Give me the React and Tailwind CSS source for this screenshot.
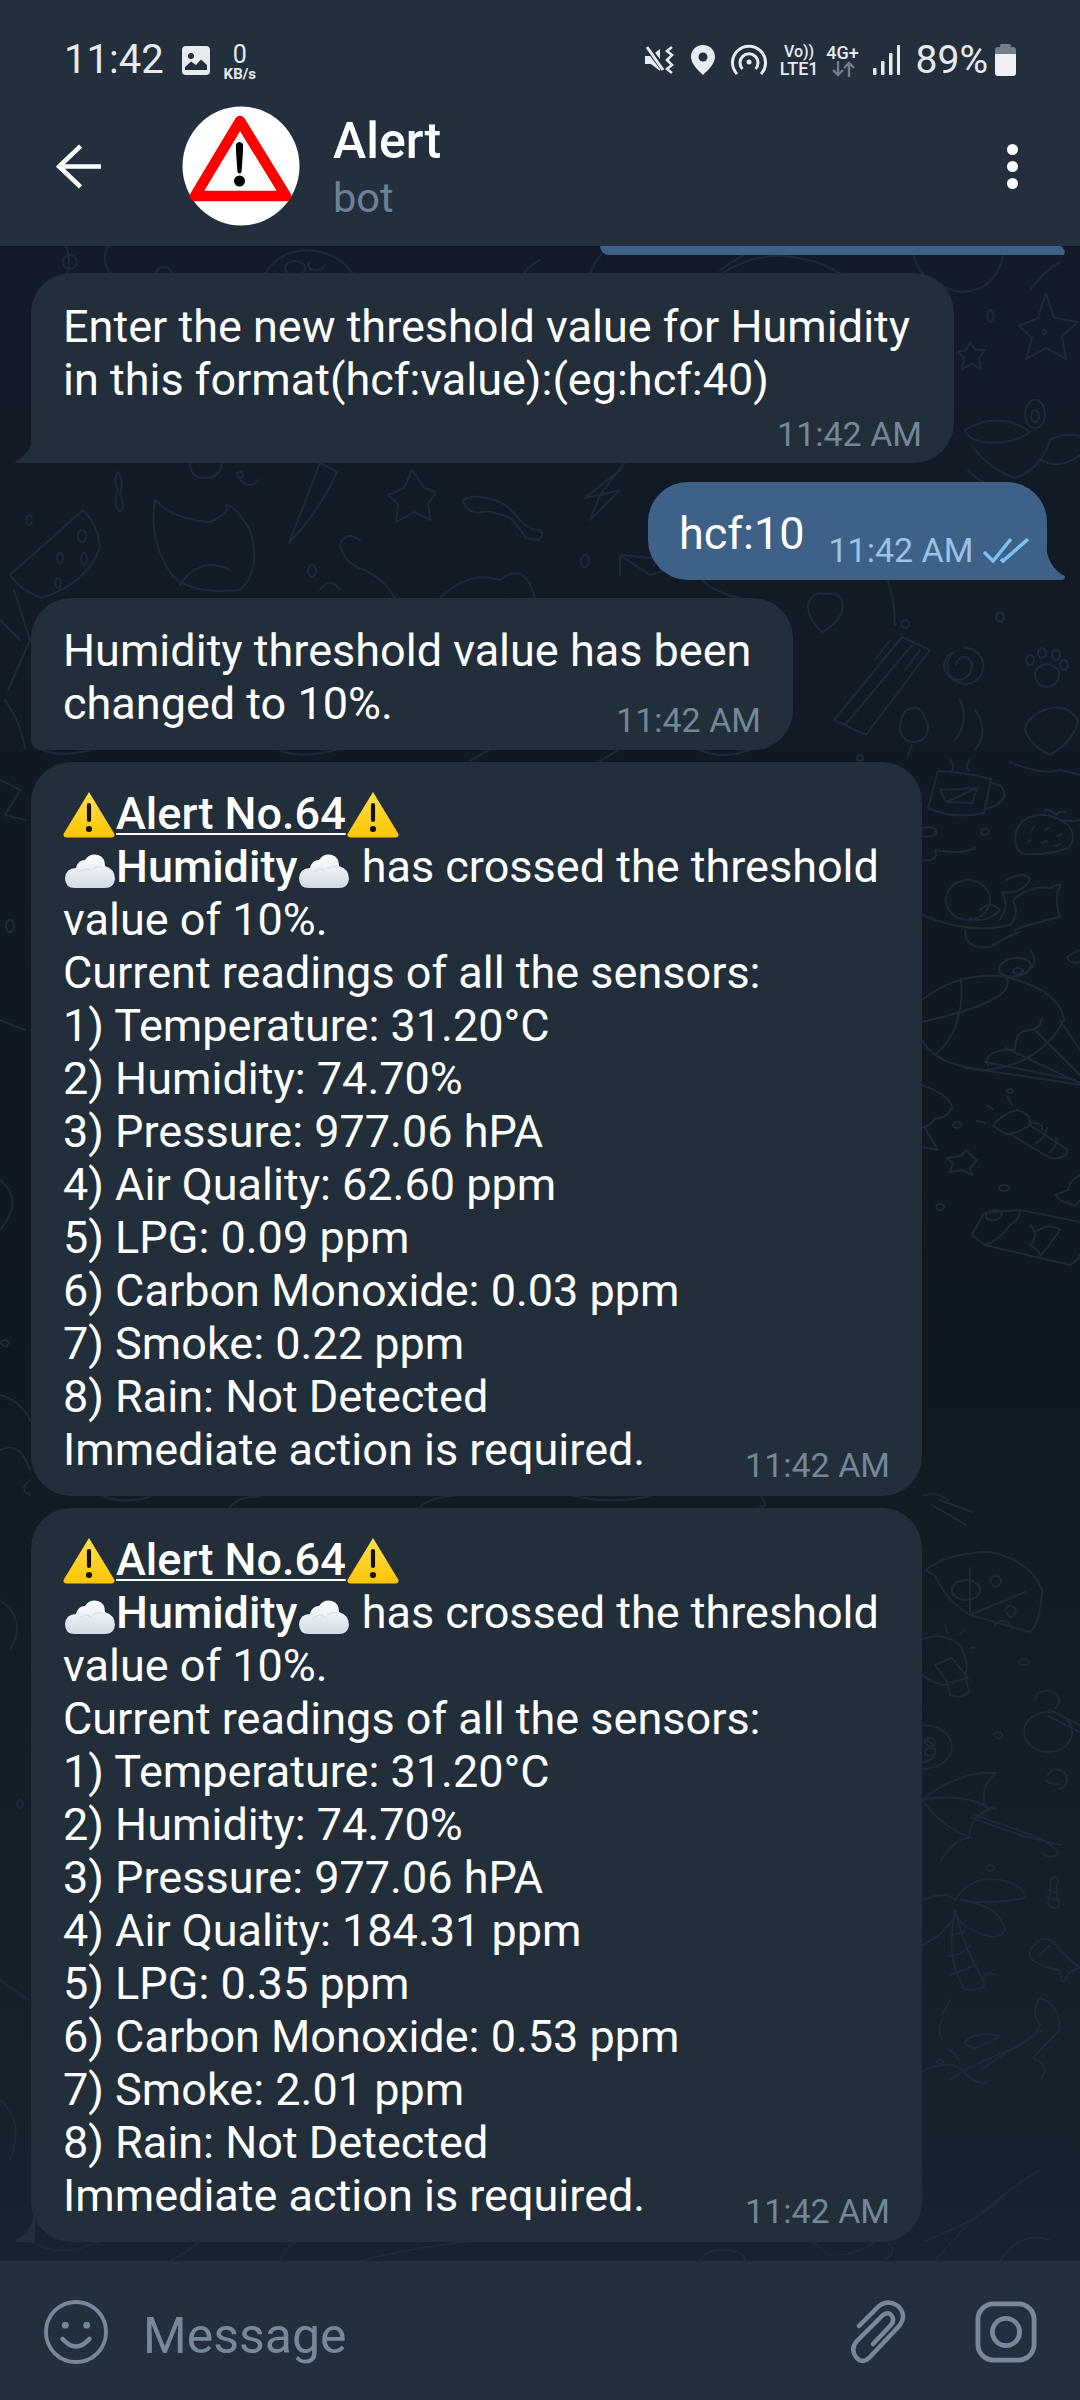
import React from "react";

const doodles = [
  "M70 262 m-7 0 a7 7 0 1 0 14 0 a7 7 0 1 0 -14 0",
  "M66 246 Q72 262 66 276 Q64 290 72 300 M108 246 Q100 262 112 275",
  "M150 290 Q155 262 168 268 Q178 275 165 290",
  "M258 290 Q270 250 310 250 Q350 255 360 290 M285 268 a10 7 0 1 0 20 0 a10 7 0 1 0 -20 0 M310 262 a8 5 0 1 0 14 4",
  "M540 260 Q520 270 520 290 M610 246 Q590 262 585 290",
  "M700 290 Q740 255 780 256 Q830 258 860 290 M720 270 Q760 240 790 246",
  "M912 246 Q915 285 962 292 Q1000 290 1005 246",
  "M1030 290 Q1045 270 1060 262",
  "M1046 293 L1054 318 L1078 322 L1062 336 L1066 359 L1046 348 L1026 359 L1032 338 L1019 326 L1038 318Z M1044 330 a2 2 0 1 0 1 0",
  "M970 343 L976 350 L985 350 L979 358 L981 369 L972 364 L962 369 L964 358 L958 352 L966 350Z",
  "M990 310 a3 6 0 1 0 1 0",
  "M1035 400 a10 14 0 1 0 .1 0 M1035 410 a4 6 0 1 0 .1 0",
  "M965 430 Q1000 410 1030 432 Q1012 445 985 442 Q968 440 965 430Z M972 446 Q990 470 1015 478 Q1040 470 1050 440 Q1065 432 1080 436",
  "M968 470 Q985 490 1020 492 M1040 460 Q1060 470 1080 455",
  "M83 510 L10 575 Q20 590 41 598 Q85 585 100 548 Q98 525 83 510Z M82 530 a4 6 0 1 0 .1 0 M60 553 a3 5 0 1 0 .1 0 M84 553 a3 6 0 1 0 .1 0 M58 578 a3 5 0 1 0 .1 0",
  "M29 515 a3 5 0 1 0 .1 0",
  "M118 490 Q112 480 118 472 Q124 480 120 495 Q126 505 120 512 Q112 505 118 490Z",
  "M155 500 Q148 540 172 575 Q190 595 240 590 Q262 570 250 530 Q235 505 226 505 M155 500 Q175 520 210 522 Q232 512 226 505 M190 463 Q190 478 205 478 Q220 478 222 463 M240 480 Q252 490 258 480 M240 472 a3 3 0 1 0 .1 0",
  "M180 585 Q200 555 230 570",
  "M320 463 L289 543 Q320 510 337 472 Z",
  "M412 470 L424 488 L436 492 L428 504 L430 520 L414 512 L396 522 L398 504 L388 495 L404 488 Z",
  "M462 500 Q475 494 486 498 Q505 500 520 520 Q528 530 540 530 Q545 536 538 540 L526 538 Q520 528 510 518 Q490 510 482 512 Q470 516 462 500Z",
  "M312 565 a4 6 0 1 0 .1 0 M585 555 a4 6 0 1 0 .1 0",
  "M620 470 L625 462 L600 495 L620 490 L590 520 L600 495 L585 498 Z",
  "M620 575 L620 555 L670 560 L688 570 M620 555 L650 575 L680 565",
  "M360 540 Q345 530 340 545 Q345 565 365 570 Q385 580 395 598 M340 590 Q330 575 320 590 M440 598 Q470 570 500 580 Q525 560 535 598",
  "M690 560 Q700 590 740 598",
  "M826 594 Q845 590 842 612 Q836 625 822 632 Q808 620 808 605 Q812 590 826 594Z",
  "M902 637 L930 650 L866 735 L834 720 Z M912 645 L845 725 M890 640 L875 660 M920 650 L905 670",
  "M886 575 Q895 600 895 625 M905 620 a4 4 0 1 0 .1 0 M1000 612 a4 5 0 1 0 .1 0",
  "M964 665 m-8 0 a8 8 0 1 1 16 0 a14 14 0 1 1 -20 -12 M964 648 a18 18 0 1 1 -10 4",
  "M1036 670 a12 12 0 1 0 22 0 q-11 -12 -22 0 M1030 655 a4 5 0 1 0 .1 0 M1042 648 a4 5 0 1 0 .1 0 M1056 650 a4 5 0 1 0 .1 0 M1064 660 a4 5 0 1 0 .1 0",
  "M900 730 a14 14 0 1 0 28 -4 q-6 -20 -14 -18 q-14 0 -14 22 M912 745 L908 755",
  "M1025 730 Q1030 745 1050 755 Q1075 740 1078 720 Q1065 700 1040 712 Q1025 720 1025 730Z",
  "M960 700 Q970 720 955 740 M975 710 Q990 730 975 750",
  "M938 771 Q965 772 991 779 L984 813 Q955 820 928 808 Z M991 783 Q1006 785 1004 797 Q1000 806 985 809 M940 790 L977 788 L972 803 L946 802 Z M946 802 L977 788",
  "M950 760 Q955 766 952 770 M970 760 Q965 766 968 770 M1010 762 Q1040 775 1060 770 Q1070 772 1080 775",
  "M1016 845 Q1012 825 1030 817 Q1048 810 1068 825 Q1078 838 1068 848 Q1050 855 1025 854 Q1018 853 1016 845Z M1045 812 Q1045 806 1056 815 Q1060 810 1066 812 M1060 820 Q1075 822 1080 820",
  "M1032 830 l2 -3 M1045 830 l4 -2 M1058 836 l4 -2 M1028 842 l3 -2 M1042 843 l5 -2 M1055 846 l5 -2",
  "M985 829 a4 3 0 1 0 .1 0",
  "M922 828 Q938 825 936 834 Q930 838 922 836 M922 860 Q940 862 935 850 Q960 855 976 848 M968 880 a22 20 0 1 0 .1 0",
  "M922 915 Q970 935 1010 925 Q1020 915 1013 900 Q1030 885 1050 888 Q1065 880 1058 890 Q1055 905 1060 917 Q1025 925 1015 930 M965 930 Q965 950 990 947 Q1010 935 1020 932",
  "M1006 880 Q1025 870 1030 880 Q1020 895 1002 892 Q1010 905 1000 920 M980 910 Q990 900 1000 910 Q985 925 970 918",
  "M1018 958 a16 9 -10 1 0 .1 0 M1018 968 a5 3 0 1 0 .1 0 M1030 950 Q1038 960 1032 968",
  "M1080 950 Q1068 955 1067 958 Q1072 965 1080 962",
  "M922 1022 Q1020 1000 1006 977 M961 978 Q965 1030 935 1055 M922 1040 Q935 1065 985 1070 Q1040 1065 1064 1020 Q1060 990 1006 977 Q960 970 922 1000",
  "M1042 1018 Q1040 1030 1030 1030 Q1015 1030 1015 1050 Q1000 1048 990 1055 Q985 1060 988 1065 M1035 1030 L1080 1075 M1060 1020 L1080 1050",
  "M965 1068 Q1020 1075 1080 1085 M1005 1048 L1080 1083 M985 1062 L1075 1080",
  "M922 1085 Q950 1095 952 1108 Q945 1120 935 1118 Q932 1125 922 1128 M925 1128 L938 1150 Q930 1148 922 1147",
  "M1010 1089 a3 2 0 1 0 .1 0 M1008 1097 l4 8 M987 1106 l6 3 M977 1121 l8 2 M957 1122 a4 3 0 1 0 .1 0",
  "M993 1126 Q1000 1115 1017 1110 Q1032 1114 1030 1125 Q1015 1135 1006 1134 Z M1010 1134 L1050 1158 Q1066 1160 1068 1150 L1030 1125 M1036 1143 Q1046 1138 1047 1128 M1050 1152 Q1058 1145 1056 1138 M1030 1122 Q1045 1124 1042 1130",
  "M961 1156 L966 1150 L974 1158 L977 1160 L970 1168 L972 1175 L962 1170 L950 1172 L953 1163 L946 1158 Z",
  "M1004 1185 a5 3 0 1 0 .1 0 M940 1204 a4 3 0 1 0 .1 0",
  "M1080 1175 Q1070 1180 1068 1190 L1055 1195 Q1065 1205 1068 1202 Q1075 1210 1080 1200",
  "M972 1235 L984 1213 L1020 1210 L1080 1222 M972 1235 L985 1245 Q1000 1240 1010 1225 Q1020 1220 1020 1210 M985 1245 L1070 1265 Q1078 1260 1080 1255",
  "M995 1210 a8 5 -10 1 0 .1 0 M1030 1225 Q1040 1235 1030 1245 Q1045 1255 1038 1258 M1035 1232 Q1050 1222 1060 1230 Q1050 1245 1040 1256",
  "M925 1570 Q950 1552 990 1552 Q1030 1560 1042 1590 Q1040 1625 1030 1632 L970 1615 Q945 1600 935 1575 Z M970 1568 L970 1615 M970 1615 L1025 1592 M952 1590 a14 10 0 1 0 28 0 a14 10 0 1 0 -28 0",
  "M990 1580 q5 -8 10 -2 q3 4 -2 8 q-4 4 -8 -6 M1005 1610 q5 -8 10 -2 q3 4 -2 8 q-4 4 -8 -6 M995 1625 Q1005 1615 1012 1628",
  "M945 1625 l3 8 M965 1630 l-5 4 M975 1647 l-5 1",
  "M922 1640 Q940 1630 960 1645 Q970 1665 965 1675 Q968 1690 970 1690 Q965 1700 950 1695 L948 1685 Q935 1685 922 1675 M935 1665 L948 1683 L968 1678 L952 1658 L942 1662 Z",
  "M1024 1659 a5 3 0 1 0 .1 0",
  "M1048 1712 a24 20 0 1 0 .1 0 M1035 1700 a12 10 0 1 1 20 8 M1050 1710 L1080 1725 M1048 1716 L1080 1732",
  "M998 1732 a4 3 0 1 0 .1 0",
  "M922 1725 a30 22 0 1 1 0 44 M922 1740 a12 10 0 1 1 0 22 M930 1738 a5 4 0 1 0 .1 0 M930 1748 a5 4 0 1 0 .1 0",
  "M1048 1775 a10 10 0 1 1 12 14 M1046 1780 Q1050 1785 1058 1784",
  "M922 1800 Q960 1770 996 1773 Q980 1785 985 1807 Q1000 1810 995 1808 M922 1800 Q960 1792 990 1808 M992 1808 Q970 1815 969 1838 Q955 1838 941 1860 M922 1800 Q945 1830 972 1838 M972 1818 L1020 1835 L1060 1845 M975 1815 L1040 1838 Q1060 1850 1058 1854 Q1050 1860 1043 1854",
  "M990 1865 a4 3 0 1 0 .1 0 M1050 1880 q6 -6 8 0 q-3 12 0 20 q4 6 -2 8 q-8 0 -8 -6 q4 -12 2 -22 M1048 1890 l10 3 M1047 1897 l10 3",
  "M922 1900 Q950 1890 955 1900 Q970 1875 1000 1880 Q1025 1885 1025 1898 Q985 1905 960 1900 Q1000 1905 1005 1930 Q1000 1940 985 1935 Q965 1930 955 1915 Q945 1935 922 1945",
  "M955 1910 Q945 1960 965 1990 Q990 1990 983 1980 Q965 1950 955 1910Z M950 1935 L965 1932 M947 1955 Q960 1958 970 1945 M950 1975 Q965 1970 975 1965 M985 1975 Q990 1972 995 1975",
  "M1040 1940 Q1025 1950 1032 1960 Q1050 1970 1060 1970 Q1060 1985 1065 1980 Q1068 1970 1080 1968 Q1065 1955 1060 1950 Q1050 1935 1040 1940Z M1040 1955 Q1046 1948 1050 1946",
  "M950 2000 Q945 2010 942 2015 M942 2020 Q937 2030 942 2040 M950 2050 Q955 2055 960 2060",
  "M1040 1998 Q1030 2010 1040 2025 Q1035 2040 1010 2050 Q970 2065 950 2080 M1040 1998 Q1060 2005 1060 2030 Q1040 2050 1033 2058 Q1050 2065 1042 2078 M1042 2030 Q1010 2050 980 2070",
  "M965 2042 Q975 2030 1000 2036 Q985 2045 975 2048 Q968 2048 965 2042Z M940 2060 a3 2 0 1 0 .1 0 M922 2072 Q945 2060 960 2068 Q980 2090 990 2080",
  "M30 2241 Q60 2260 100 2241 M170 2261 Q190 2250 200 2241 M280 2261 Q290 2240 300 2241 M360 2261 Q400 2250 470 2241 M700 2261 Q705 2250 720 2250 Q745 2250 745 2261 M810 2241 L830 2255 Q860 2255 875 2241 a10 8 0 1 1 10 18",
  "M925 2241 Q980 2220 1005 2195 M935 2261 Q975 2210 1040 2170 M1000 2261 Q1020 2230 1050 2240",
  "M40 749 Q60 758 90 750 M280 750 Q300 760 340 749 M470 761 L490 749 M600 761 L620 749 M700 750 Q720 760 750 750 M860 755 a3 3 0 1 0 .1 0",
  "M100 1495 Q120 1505 150 1497 M230 1507 Q240 1495 260 1497 M420 1507 Q430 1497 460 1495 M570 1495 Q610 1505 650 1496 M760 1495 Q770 1507 760 1507",
  "M924 1495 Q940 1492 948 1500 M932 1505 L966 1525 M940 1500 L972 1512",
  "M0 1395 Q20 1400 30 1420 M0 1450 Q20 1440 30 1470 M30 1480 Q18 1490 30 1495",
  "M0 780 L20 790 L5 815 L25 820 M0 1020 L25 1030 M10 920 a4 6 0 1 0 .1 0 M0 1180 Q25 1200 0 1230 M5 1340 a4 3 0 1 0 .1 0 M0 1600 Q28 1620 10 1650 M20 1800 a3 4 0 1 0 .1 0 M0 1980 L28 2000 M0 2100 Q25 2120 10 2160 M14 590 L30 640 L8 690 M0 620 L20 640 M5 700 Q20 720 25 748",
];

function Warn({ className }) {
  return (
    <svg viewBox="0 0 50 47" preserveAspectRatio="none" className={"inline-block w-[52px] h-[47px] align-[-9px] " + className}>
      <defs>
        <linearGradient id="wg" x1="0" y1="0" x2="0" y2="1">
          <stop offset="0" stopColor="#ffe14d" />
          <stop offset="1" stopColor="#ffc400" />
        </linearGradient>
      </defs>
      <path d="M25 1 L49.5 43 Q50 46 47 46.5 L3 46.5 Q0 46 .5 43Z" fill="url(#wg)" />
      <rect x="23" y="12" width="4" height="19" rx="2" fill="#111" />
      <circle cx="25" cy="38" r="3" fill="#111" />
    </svg>
  );
}

function Cloud({ className }) {
  return (
    <svg viewBox="0 0 50 36" className={"inline-block w-[50px] h-[36px] align-[-7px] " + className}>
      <defs>
        <linearGradient id="cg" x1="0" y1="0" x2="0" y2="1">
          <stop offset="0" stopColor="#ffffff" />
          <stop offset="1" stopColor="#d3dbe4" />
        </linearGradient>
      </defs>
      <path d="M10 35 Q0 35 0 25 Q1 15 11 15 Q13 7 20 7 Q25 0 33 2 Q40 4 40 13 Q50 16 50 26 Q49 35 40 35Z" fill="url(#cg)" />
      <path d="M14 19 Q22 14 26 18 M28 16 Q34 12 38 15" stroke="#d8dee6" strokeWidth="1.2" fill="none" />
    </svg>
  );
}

function Alert({ air, lpg, co, smoke }) {
  return (
    <div className="relative w-[891px] ml-[31px] rounded-[40px] bg-[#222e3a] pt-[25px] pb-[11px] pl-[32px] pr-[32px] flex flex-col">
      <div className="text-[45px] leading-[53px] text-white whitespace-nowrap">
        <div>
          <Warn className="mr-[1px]" />
          <span className="font-medium underline decoration-[2px] underline-offset-[4px]">Alert No.64</span>
          <Warn className="ml-[1px]" />
        </div>
        <div>
          <Cloud className="ml-[2px] mr-[1px]" />
          <span className="font-medium">Humidity</span>
          <Cloud className="ml-[2px] mr-[1px]" /> has crossed the threshold
        </div>
        <div>value of 10%.</div>
        <div>Current readings of all the sensors:</div>
        <div>1) Temperature: 31.20°C</div>
        <div>2) Humidity: 74.70%</div>
        <div>3) Pressure: 977.06 hPA</div>
        <div>4) Air Quality: {air} ppm</div>
        <div>5) LPG: {lpg} ppm</div>
        <div>6) Carbon Monoxide: {co} ppm</div>
        <div>7) Smoke: {smoke} ppm</div>
        <div>8) Rain: Not Detected</div>
        <div>Immediate action is required.</div>
      </div>
      <Time className="-mt-[31px]" />
    </div>
  );
}

function Time({ className }) {
  return (
    <div className={"self-end text-[34px] leading-[40px] text-[#74879a] " + className}>11:42 AM</div>
  );
}

function TailLeft() {
  return (
    <svg viewBox="0 0 20 40" className="absolute left-[-16px] bottom-0 w-[20px] h-[40px]">
      <path d="M20 0 Q20 30 0 38 Q0 40 3 40 L20 40Z" fill="#222e3a" />
    </svg>
  );
}

function TailRight({ fill }) {
  return (
    <svg viewBox="0 0 20 40" className="absolute right-[-18px] bottom-0 w-[20px] h-[40px]">
      <path d="M0 0 Q2 28 20 36 Q20 40 17 40 L0 40Z" fill={fill} />
    </svg>
  );
}

export default function App() {
  return (
    <div className="w-[1080px] h-[2400px] flex flex-col overflow-hidden bg-[#111a25] font-['Roboto',sans-serif]">
      <header className="h-[246px] shrink-0 bg-[#232f3d] flex flex-col z-10">
        <div className="h-[120px] flex items-center justify-between pl-[64px] pr-[64px]">
          <div className="flex items-center text-[#e8ebee]">
            <span className="text-[40px] leading-[44px]">11:42</span>
            <svg viewBox="0 0 28 29" className="w-[28px] h-[29px] ml-[18px]">
              <rect width="28" height="29" rx="4" fill="#e8ebee" />
              <circle cx="9" cy="10" r="3" fill="#232f3d" />
              <path d="M3 24 L3 21 L9 15.5 L14 19 L19 13.5 L25 19 L25 24Z" fill="#232f3d" />
            </svg>
            <div className="flex flex-col items-center ml-[14px] mt-[4px]">
              <span className="text-[25px] leading-[24px]">0</span>
              <span className="text-[15px] leading-[14px] font-bold">KB/s</span>
            </div>
          </div>
          <div className="flex items-center text-[#e8ebee]">
            <svg viewBox="0 0 29 28" className="w-[29px] h-[28px]">
              <path d="M0 10 L6 10 L15 3 L15 25 L6 18 L0 18Z" fill="#e8ebee" />
              <path d="M2 1 L20 25" stroke="#232f3d" strokeWidth="6" />
              <path d="M2 1 L18 24" stroke="#e8ebee" strokeWidth="3" />
              <path d="M27 1 L22 5 L27 9 L22 14 L27 19 L22 23 L27 27" stroke="#e8ebee" strokeWidth="2.5" fill="none" />
            </svg>
            <svg viewBox="0 0 24 30" className="w-[24px] h-[30px] ml-[17px]">
              <path d="M12 0 C5 0 0 5 0 12 C0 19 8 26 12 30 C16 26 24 19 24 12 C24 5 19 0 12 0Z" fill="#e8ebee" />
              <circle cx="12" cy="12" r="4.5" fill="#232f3d" />
            </svg>
            <svg viewBox="0 0 36 32" fill="none" stroke="#e8ebee" strokeWidth="3" className="w-[36px] h-[32px] ml-[16px]">
              <path d="M6 30 A16.5 16.5 0 1 1 30 30" />
              <path d="M11.5 25 A9 9 0 1 1 24.5 25" />
              <circle cx="18" cy="18" r="2.5" fill="#e8ebee" stroke="none" />
            </svg>
            <div className="flex flex-col items-center ml-[13px] w-[39px] font-medium">
              <span className="text-[16px] leading-[17px]">Vo))</span>
              <span className="text-[18px] leading-[18px]">LTE1</span>
            </div>
            <div className="flex flex-col items-center ml-[7px] w-[34px] font-medium">
              <span className="text-[18px] leading-[17px]">4G+</span>
              <svg viewBox="0 0 24 16" className="w-[24px] h-[16px]" fill="none" stroke="#737e89" strokeWidth="2.4">
                <path d="M7 0 V14 M2 9 L7 14 L12 9" />
                <path d="M18 16 V2 M13 7 L18 2 L23 7" />
              </svg>
            </div>
            <svg viewBox="0 0 27 30" className="w-[27px] h-[30px] ml-[13px]" fill="#e8ebee">
              <rect x="0" y="23" width="3.5" height="7" rx="1" />
              <rect x="8" y="16" width="3.5" height="14" rx="1" />
              <rect x="16" y="8" width="3.5" height="22" rx="1" />
              <rect x="24" y="0" width="3" height="30" rx="1" />
            </svg>
            <span className="text-[39px] leading-[44px] ml-[16px]">89%</span>
            <svg viewBox="0 0 21 32" className="w-[21px] h-[32px] ml-[7px]">
              <path d="M6 0 H15 Q16 0 16 3 H18 Q21 3 21 6 V10 H0 V6 Q0 3 3 3 H5 Q5 0 6 0Z" fill="#737e89" />
              <path d="M0 10 H21 V29 Q21 32 18 32 H3 Q0 32 0 29Z" fill="#eef0f2" />
            </svg>
          </div>
        </div>
        <div className="flex items-center pl-[56px] pr-[62px] -mt-[14px]">
          <svg viewBox="0 0 44 44" fill="none" stroke="#fff" strokeWidth="4.5" className="w-[45px] h-[45px]">
            <path d="M44 22 H4 M24 2 L3 22 L24 42" />
          </svg>
          <svg viewBox="0 0 118 120" className="w-[118px] h-[120px] ml-[81px]">
            <ellipse cx="59" cy="60" rx="58.5" ry="59.5" fill="#fff" />
            <path d="M58 15 L13 90 L104 90Z" fill="#fff" stroke="#f00" strokeWidth="10.5" strokeLinejoin="round" />
            <path d="M54 38 Q57.5 34 61 38 Q61.5 41 59.5 66 Q57.5 69 55.5 66 Q53.5 41 54 38Z" fill="#000" />
            <circle cx="57.5" cy="75" r="5.5" fill="#000" />
          </svg>
          <div className="ml-[33px] flex flex-col mt-[2px]">
            <span className="text-[50px] leading-[56px] font-medium text-white">Alert</span>
            <span className="text-[41.5px] leading-[46px] text-[#6e8195] mt-[6px]">bot</span>
          </div>
          <div className="ml-auto flex flex-col gap-[6px]">
            <span className="block w-[11px] h-[11px] rounded-full bg-white"></span>
            <span className="block w-[11px] h-[11px] rounded-full bg-white"></span>
            <span className="block w-[11px] h-[11px] rounded-full bg-white"></span>
          </div>
        </div>
      </header>

      <main className="relative flex-1 flex flex-col overflow-hidden bg-gradient-to-b from-[#121a27] via-[#0f1820] to-[#16222d]">
        <svg viewBox="0 246 1080 2015" className="absolute inset-0 w-full h-full" fill="none" stroke="#1d2936" strokeWidth="2" strokeLinecap="round" strokeLinejoin="round">
          {doodles.map((d, i) => (
            <path key={i} d={d} />
          ))}
        </svg>

        <div className="relative flex flex-col">
          <div className="relative self-end mr-[33px] w-[447px] h-[9px] bg-[#3e6188] rounded-bl-[24px]">
            <svg viewBox="0 0 18 9" className="absolute right-[-18px] top-0 w-[18px] h-[9px]">
              <path d="M0 0 L14 0 L18 5 L17 9 L0 9Z" fill="#3e6188" />
            </svg>
          </div>

          <div className="relative mt-[18px] w-[923px] ml-[31px] rounded-[40px] rounded-bl-none bg-[#222e3a] pt-[27px] pb-[9px] pl-[32px] pr-[32px] flex flex-col">
            <TailLeft />
            <div className="text-[45px] leading-[53px] text-white">
              <div>Enter the new threshold value for Humidity</div>
              <div>in this format(hcf:value):(eg:hcf:40)</div>
            </div>
            <Time className="mt-[8px]" />
          </div>

          <div className="relative mt-[19px] self-end mr-[33px] w-[399px] h-[98px] rounded-[40px] rounded-br-none bg-[#3e6188] flex items-start pl-[31px]">
            <TailRight fill="#3e6188" />
            <span className="text-[45px] leading-[53px] text-white mt-[25px]">hcf:10</span>
            <span className="text-[34px] leading-[40px] text-[#9cc2e5] ml-[24px] mt-[48px]">11:42 AM</span>
            <svg viewBox="0 0 46 26" fill="none" stroke="#7cc0fa" strokeWidth="3.5" className="w-[46px] h-[26px] ml-[10px] mt-[55px]">
              <path d="M1 15 L10 24 L28 2" />
              <path d="M18 22 L20 24 L45 2" />
            </svg>
          </div>

          <div className="relative mt-[18px] w-[762px] ml-[31px] rounded-[40px] rounded-bl-[10px] bg-[#222e3a] pt-[26px] pb-[10px] pl-[32px] pr-[32px] flex flex-col">
            <div className="text-[45px] leading-[53px] text-white">
              <div>Humidity threshold value has been</div>
              <div>changed to 10%.</div>
            </div>
            <Time className="-mt-[30px]" />
          </div>

          <div className="mt-[12px] flex flex-col gap-[12px]">
            <Alert air="62.60" lpg="0.09" co="0.03" smoke="0.22" />
            <div className="relative">
              <Alert air="184.31" lpg="0.35" co="0.53" smoke="2.01" />
              <svg viewBox="0 0 20 40" className="absolute left-[15px] bottom-0 w-[20px] h-[40px]">
                <path d="M20 0 Q20 30 0 38 Q0 40 3 40 L20 40Z" fill="#222e3a" />
              </svg>
            </div>
          </div>
        </div>
      </main>

      <footer className="h-[139px] shrink-0 bg-[#232f3d] flex items-center pl-[44px] pr-[43px]">
        <svg viewBox="0 0 66 66" fill="none" stroke="#76889a" strokeWidth="4" strokeLinecap="round" className="w-[64px] h-[64px] mt-[3px]">
          <circle cx="33" cy="33" r="31" />
          <circle cx="22" cy="26" r="3.5" fill="#76889a" stroke="none" />
          <circle cx="44" cy="26" r="3.5" fill="#76889a" stroke="none" />
          <path d="M19 40 Q33 56 47 40" strokeWidth="4.5" />
        </svg>
        <span className="text-[50px] leading-[56px] text-[#76889a] ml-[35px] mt-[11px]">Message</span>
        <svg viewBox="0 0 56 66" fill="none" stroke="#76889a" strokeWidth="4.5" strokeLinecap="round" className="w-[56px] h-[66px] ml-auto mt-[3px]">
          <path d="M9 27 L29 7 Q38 0 48 7 Q57 16 50 26 L20 58 Q12 66 6 58 Q0 50 7 42 L33 16 Q39 12 42 17 Q45 22 40 27 L23 45" />
        </svg>
        <svg viewBox="0 0 64 64" fill="none" stroke="#76889a" strokeWidth="5" className="w-[62px] h-[64px] ml-[69px] mt-[3px]">
          <rect x="3" y="3" width="58" height="58" rx="16" />
          <circle cx="32" cy="32" r="14" />
        </svg>
      </footer>
    </div>
  );
}
